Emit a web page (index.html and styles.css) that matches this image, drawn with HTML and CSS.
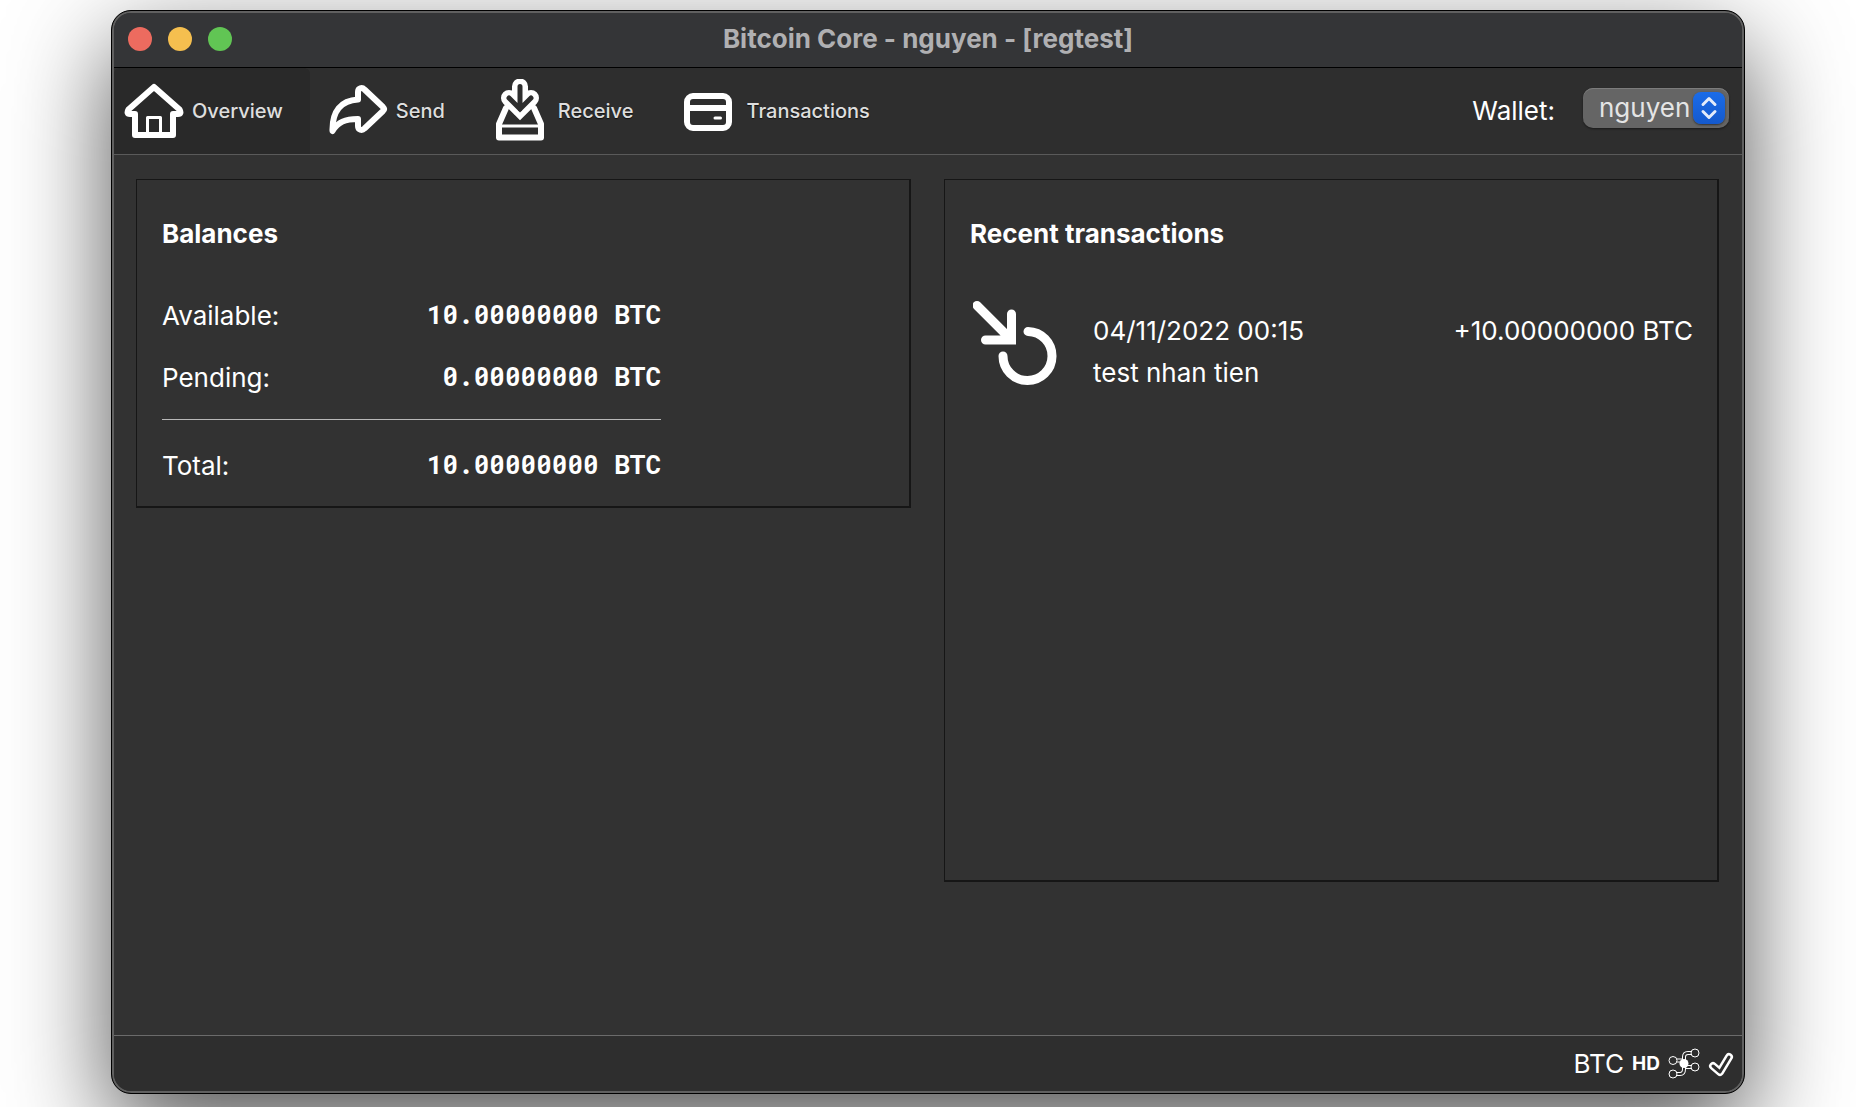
FILE: index.html
```html
<!DOCTYPE html>
<html lang="en">
<head>
<meta charset="utf-8">
<title>Bitcoin Core - nguyen - [regtest]</title>
<link rel="stylesheet" href="styles.css">
</head>
<body>
<div class="window">
  <header class="titlebar">
    <div class="lights">
      <button class="light light-close" aria-label="Close"></button>
      <button class="light light-minimize" aria-label="Minimize"></button>
      <button class="light light-zoom" aria-label="Zoom"></button>
    </div>
    <h1 class="title">Bitcoin Core - nguyen - [regtest]</h1>
  </header>

  <div class="toolbar">
    <nav class="tabs">
      <button class="tab tab-active">
        <svg class="tab-icon" viewBox="0 -2 60 64" aria-hidden="true">
          <path class="line" d="M30 6 L4.500 28.500 Q2 33 6 33 H11 V54 H49 V33 H54 Q58 33 55.500 28.500 Z"/>
          <path class="line thin" d="M23.500 54 V36.500 H36.500 V54"/>
        </svg>
        Overview
      </button>
      <button class="tab">
        <svg class="tab-icon" viewBox="0 -2 60 64" aria-hidden="true">
          <path class="line" d="M4.500 50 C4 30 13 19.500 30 18.500 V11 C30 7 34 6 36.500 8.500 L55 26 Q57 28 55 30 L36.500 47.500 C34 50 30 49 30 45 V38 C17 38 10 41 4.500 50 Z"/>
        </svg>
        Send
      </button>
      <button class="tab">
        <svg class="tab-icon" viewBox="0 -2 60 64" aria-hidden="true">
          <path class="line" d="M16 27 L9 43 V56.500 H51 V43 L44 27"/>
          <path class="line thin" d="M9 45 H51"/>
          <path class="arrow-outer" d="M30 5.500 V28 M19 17 L30 28 L41 17"/>
          <path class="arrow-inner" d="M30 5.500 V28 M19 17 L30 28 L41 17"/>
        </svg>
        Receive
      </button>
      <button class="tab">
        <svg class="tab-icon" viewBox="0 -2 60 64" aria-hidden="true">
          <rect class="line" x="9" y="15" width="42" height="32" rx="6"/>
          <path class="line flat" d="M9 27 H51"/>
          <path class="line thin" d="M37 37 H42.500"/>
        </svg>
        Transactions
      </button>
    </nav>
    <div class="wallet">
      <label for="wallet-select">Wallet:</label>
      <div class="picker">
        <select id="wallet-select"><option>nguyen</option></select>
        <svg class="stepper" viewBox="0 0 32 32" aria-hidden="true">
          <path d="M10 12.500 L16 6.500 L22 12.500 M10 19.500 L16 25.500 L22 19.500"/>
        </svg>
      </div>
    </div>
  </div>

  <main class="overview">
    <section class="panel">
      <h2>Balances</h2>
      <table class="balances">
        <tbody>
          <tr><th scope="row">Available:</th><td>10.00000000 BTC</td></tr>
          <tr><th scope="row">Pending:</th><td>0.00000000 BTC</td></tr>
        </tbody>
      </table>
      <table class="balances sum">
        <tbody>
          <tr><th scope="row">Total:</th><td>10.00000000 BTC</td></tr>
        </tbody>
      </table>
    </section>
    <section class="panel panel-tall">
      <h2>Recent transactions</h2>
      <ul class="transactions">
        <li class="transaction">
          <svg class="tx-icon" viewBox="0 0 84 84" aria-hidden="true">
            <path d="M4 4.500 L38 38.500 M38.500 13 V39 H12.500"/>
            <path d="M55 30.500 A24.500 24.500 0 1 1 30 55"/>
          </svg>
          <div class="tx-text">
            <div class="tx-head"><time datetime="2022-11-04T00:15">04/11/2022 00:15</time><span>+10.00000000 BTC</span></div>
            <div>test nhan tien</div>
          </div>
        </li>
      </ul>
    </section>
  </main>

  <footer class="statusbar">
    <span>BTC</span>
    <strong class="hd">HD</strong>
    <svg class="network" viewBox="0 0 32 32" aria-hidden="true">
      <path class="wire" d="M9 12.500 H13 L16 16 M16 16 V9 Q16 5 20 5 H23 M16 16 L19 19 H23 M16 16 V21 Q16 26 12 26 H9"/>
      <path class="core" d="M9 12.500 H13 L16 16 M16 16 V9 Q16 5 20 5 H23 M16 16 L19 19 H23 M16 16 V21 Q16 26 12 26 H9"/>
      <circle class="node" cx="5" cy="12.500" r="4"/><circle class="node" cx="27" cy="5" r="4"/>
      <circle class="node" cx="27" cy="19" r="4"/><circle class="node" cx="5" cy="26" r="4"/>
      <circle class="hub" cx="16" cy="15.500" r="4.500"/>
    </svg>
    <svg class="check" viewBox="0 0 26 26" aria-hidden="true">
      <path class="check-outer" d="M5 15 L12 21 L21 6"/>
      <path class="check-inner" d="M5 15 L12 21 L21 6"/>
    </svg>
  </footer>
</div>
</body>
</html>
```
FILE: styles.css
```css
* { box-sizing: border-box; }

body {
  margin: 0;
  padding: 10px 111px 13px;
  background: #fff;
  color: #fff;
  font: 26px/32px Inter, "Liberation Sans", sans-serif;
}

button, select { font: inherit; color: inherit; border: 0; }

.window {
  display: flex;
  flex-direction: column;
  min-height: calc(100vh - 23px);
  border: 1px solid #000;
  border-radius: 20px;
  background: #323232;
  box-shadow: inset 0 0 0 2px #606060, 0 36px 100px rgba(0, 0, 0, .68);
  padding: 2px;
}

.titlebar {
  display: grid;
  grid-template-columns: 1fr auto 1fr;
  align-items: center;
  height: 55px;
  padding: 0 14px 3px;
  border-bottom: 1px solid #000;
  border-radius: 17px 17px 0 0;
  background: #343537;
}

.lights { display: flex; gap: 16px; }
.light { width: 24px; height: 24px; padding: 0; border-radius: 50%; }
.light-close { background: #ed6b5f; }
.light-minimize { background: #f5bf4f; }
.light-zoom { background: #61c554; }
.title { margin: 0; font-size: 26px; font-weight: 700; color: #b0b0b2; }

.toolbar {
  display: flex;
  justify-content: space-between;
  height: 87px;
  border-bottom: 1px solid #5a5a5a;
  background: #2e2e2e;
}

.tabs { display: flex; gap: 8px; }
.tab {
  display: flex;
  align-items: center;
  gap: 8px;
  padding: 0 27px 0 10px;
  background: none;
  border-radius: 6px 6px 0 0;
  color: #dedede;
  font-size: 20px;
  font-weight: 500;
  line-height: 32px;
  text-shadow: 0 1px 1px #111;
}
.tab-active { background: #292929; text-shadow: none; }
.tab-icon { width: 60px; height: 64px; }

.line { fill: none; stroke: #fff; stroke-width: 6; stroke-linejoin: round; stroke-linecap: round; }
.thin { stroke-width: 3; }
.flat { stroke-linecap: butt; }
.arrow-outer { fill: none; stroke: #fff; stroke-width: 16; stroke-linecap: round; }
.arrow-inner { fill: none; stroke: #2e2e2e; stroke-width: 5; stroke-linecap: round; }

.wallet { display: flex; align-items: center; gap: 28px; padding-right: 13px; }
.picker { position: relative; margin-bottom: 6px; }
.picker select {
  appearance: none;
  display: block;
  width: 146px;
  height: 40px;
  padding: 0 0 0 16px;
  border-radius: 10px;
  background: #656565;
  box-shadow: inset 0 1px 0 #7c7c7c, 0 1px 2px #1a1a1a;
  color: #e4e4e4;
}
.stepper {
  position: absolute;
  top: 4px;
  right: 4px;
  width: 32px;
  height: 32px;
  border-radius: 8px;
  background: linear-gradient(#1b6ce8, #1459cd);
  box-shadow: 0 1px 2px #333;
  pointer-events: none;
}
.stepper path { fill: none; stroke: #e4ecfa; stroke-width: 3; stroke-linecap: round; stroke-linejoin: round; }

.overview {
  display: grid;
  grid-template-columns: 1fr 1fr;
  gap: 33px;
  flex: 1;
  padding: 24px 23px 153px 22px;
  align-items: start;
}
.panel {
  border: solid #161616;
  border-width: 1px 2px 2px 1px;
  padding: 38px 24px 9px 25px;
}
.panel-tall { align-self: stretch; }
.panel h2 { margin: 0; font-size: 26px; line-height: 32px; font-weight: 700; }

.balances { width: 499px; margin-top: 35px; border-spacing: 0; }
.balances th { padding: 15px 0; text-align: left; font-weight: 400; vertical-align: top; }
.balances td { padding: 13px 0 17px; text-align: right; vertical-align: top; font: 700 26px/32px "Roboto Mono", "DejaVu Sans Mono", monospace; }
.balances.sum { margin-top: 10px; padding-top: 15px; border-top: 1px solid #b8b8b8; }

.transactions { list-style: none; margin: 51px 0 0; padding: 0 0 0 3px; }
.transaction { display: flex; gap: 36px; }
.tx-icon { flex: none; width: 84px; height: 84px; fill: none; stroke: #fff; stroke-width: 9; stroke-linecap: round; }
.tx-text { flex: 1; padding-top: 9px; line-height: 42px; }
.tx-head { display: flex; justify-content: space-between; }

.statusbar {
  display: flex;
  align-items: center;
  justify-content: flex-end;
  gap: 8px;
  height: 56px;
  padding-right: 8px;
  border-top: 1px solid #6b6b6b;
  border-radius: 0 0 17px 17px;
  background: #2e2e2e;
}
.hd { font-size: 19px; }
.network { width: 32px; height: 32px; }
.wire { fill: none; stroke: #fff; stroke-width: 4; }
.core { fill: none; stroke: #2e2e2e; stroke-width: 2; }
.node { fill: #2e2e2e; stroke: #fff; stroke-width: 1; }
.hub { fill: #fff; }
.check { width: 26px; height: 26px; }
.check path { fill: none; stroke-linecap: round; stroke-linejoin: round; }
.check-outer { stroke: #fff; stroke-width: 8; }
.check-inner { stroke: #2e2e2e; stroke-width: 3; }
```
